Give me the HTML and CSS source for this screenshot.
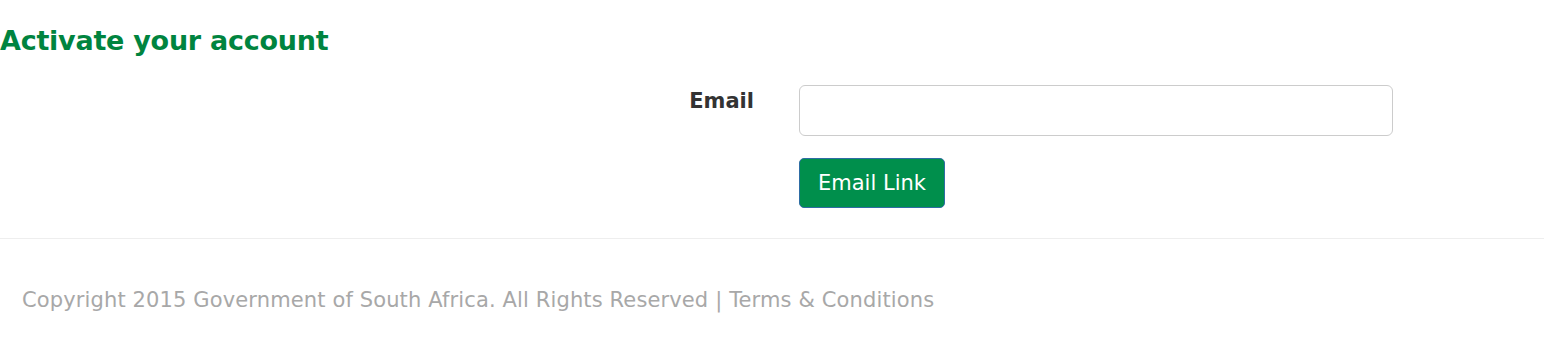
FILE: index.html
```html
<!DOCTYPE html>
<html>
<head>
<meta charset="utf-8">
<link rel="stylesheet" href="styles.css">
</head>
<body>
<main class="content">
  <h1 class="title">Activate your account</h1>
  <form class="form">
    <div class="row">
      <label class="label" for="email">Email</label>
      <div class="field"><input id="email" class="input" type="text"></div>
    </div>
    <div class="row">
      <div class="label"></div>
      <div class="field"><button type="button" class="btn">Email Link</button></div>
    </div>
  </form>
</main>
<footer class="footer">
  <p class="copy">Copyright 2015 Government of South Africa. All Rights Reserved | Terms &amp; Conditions</p>
</footer>
</body>
</html>
```

FILE: styles.css
```css
html, body {
  margin: 0;
  padding: 0;
  background: #fff;
  font-family: "DejaVu Sans", Verdana, sans-serif;
}
.content {
  padding-top: 26px;
}
.title {
  margin: 0;
  color: #00843f;
  font-size: 27px;
  letter-spacing: -0.25px;
  font-weight: bold;
  line-height: 30px;
}
.form {
  margin-top: 29px;
  padding-bottom: 30px;
  border-bottom: 1px solid #eee;
}
.row {
  display: flex;
  margin-bottom: 22px;
}
.row:last-child {
  margin-bottom: 0;
}
.label {
  width: 754px;
  text-align: right;
  font-weight: bold;
  font-size: 21px;
  line-height: 30px;
  color: #333;
  padding-top: 1px;
  box-sizing: border-box;
}
.field {
  margin-left: 45px;
}
.input {
  display: block;
  width: 594px;
  height: 51px;
  box-sizing: border-box;
  border: 1px solid #ccc;
  border-radius: 6px;
  padding: 9px 18px;
  font-size: 21px;
  font-family: inherit;
  margin: 0;
}
.btn {
  display: block;
  height: 50px;
  box-sizing: border-box;
  background: #008f4c;
  color: #fff;
  border: 1px solid #2e6da4;
  border-radius: 5px;
  padding: 0 18px;
  font-size: 21px;
  font-family: inherit;
  margin: 0;
}
.footer {
  padding: 46px 22px;
}
.copy {
  margin: 0;
  color: #a8a8a8;
  font-size: 21px;
  letter-spacing: 0.13px;
  line-height: 30px;
}
```
